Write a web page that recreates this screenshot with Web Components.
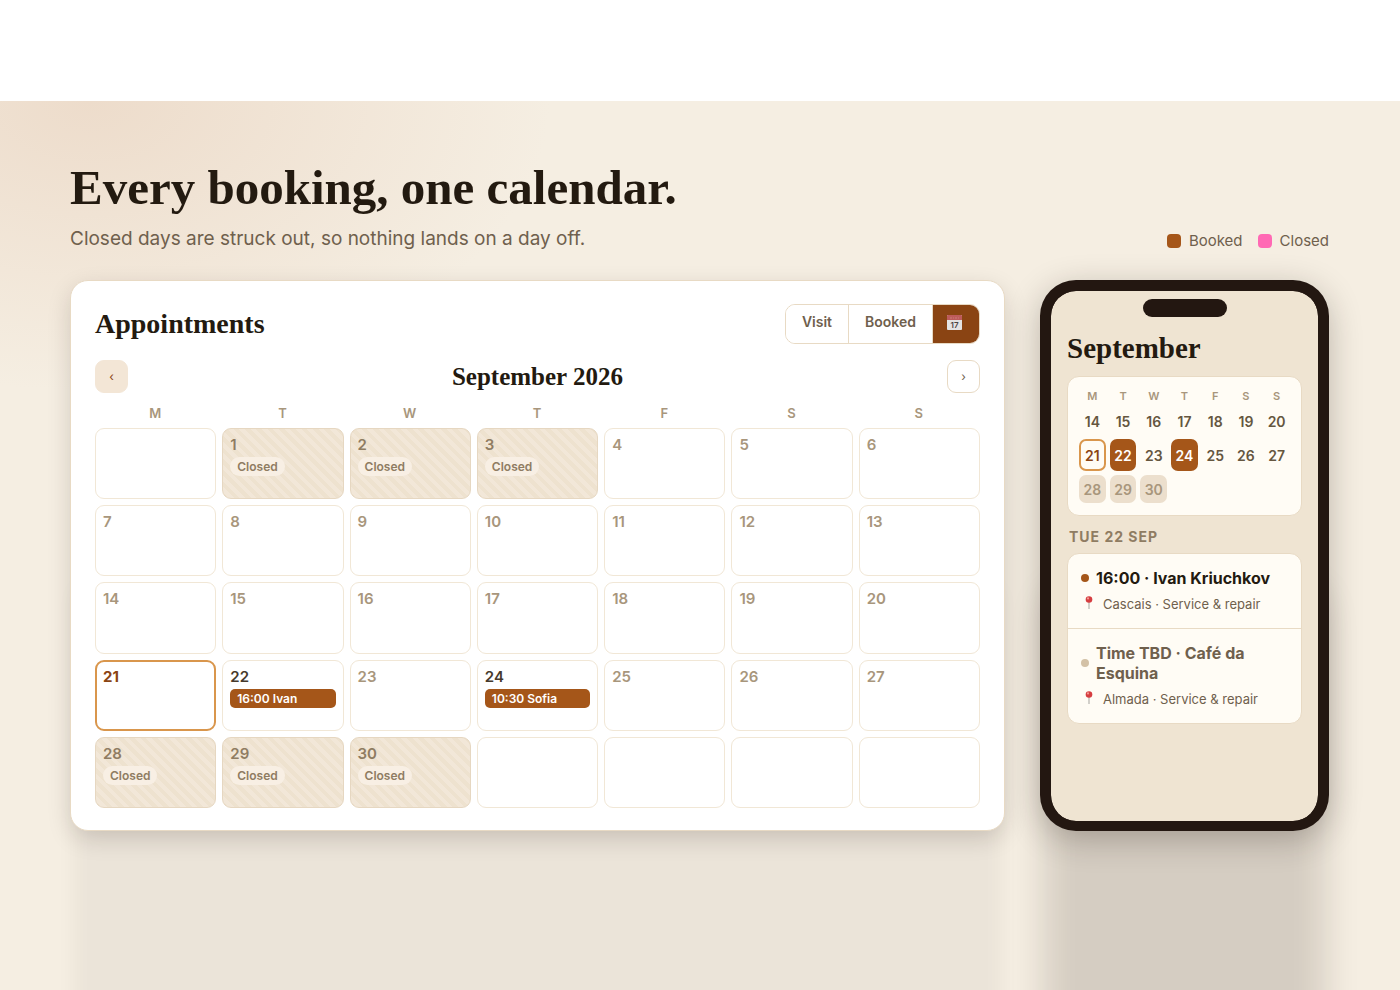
<!DOCTYPE html>
<html lang="en">
<head>
<meta charset="utf-8">
<title>Booking calendar</title>
<style>
  :root {
    --ink: #231a10;
    --muted: #6f604d;
    --faint: #a8967c;
    --line: #e8dac4;
    --rust: #a55619;
    --rust-dark: #8a4413;
    --sand: #efe4d2;
    --amber: #d9964c;
    --serif: "Liberation Serif", "Times New Roman", serif;
  }
  * { box-sizing: border-box; }
  body {
    margin: 0;
    min-height: 100vh;
    display: flex;
    flex-direction: column;
    background: #fff;
    color: var(--ink);
    font-family: Inter, "Liberation Sans", sans-serif;
    overflow: hidden;
  }
</style>
</head>
<body>
<booking-showcase>
  <h1 slot="title">Every booking, one calendar.</h1>
  <p slot="lead">Closed days are struck out, so nothing lands on a day off.</p>
  <legend-item slot="legend">Booked</legend-item>
  <legend-item slot="legend" tone="closed">Closed</legend-item>
  <month-card>
    <span slot="title">Appointments</span>
    <span slot="month">September 2026</span>
  </month-card>
  <phone-frame>
    <span slot="title">September</span>
    <mini-calendar></mini-calendar>
    <day-agenda>
      <span slot="date">TUE 22 SEP</span>
      <agenda-item>16:00 · Ivan Kriuchkov<span slot="place">Cascais · Service &amp; repair</span></agenda-item>
      <agenda-item pending>Time TBD · Café da Esquina<span slot="place">Almada · Service &amp; repair</span></agenda-item>
    </day-agenda>
  </phone-frame>
</booking-showcase>

<script>
const DAYS = ['M', 'T', 'W', 'T', 'F', 'S', 'S'];
const CLOSED = [1, 2, 3, 28, 29, 30];
const EVENTS = { 22: '16:00 Ivan', 24: '10:30 Sofia' };
const TODAY = 21;

function mount(el, html) {
  el.attachShadow({ mode: 'open' }).innerHTML = '<style>*{box-sizing:border-box}</style>' + html;
}

customElements.define('booking-showcase', class extends HTMLElement {
  connectedCallback() {
    mount(this, `
      <style>
        :host {
          display: block;
          flex: 1;
          margin-top: 101px;
          padding: 58px 71px 0 70px;
          background:
            radial-gradient(ellipse 460px 290px at 90px 0, #eddccb, rgba(237, 220, 203, 0)),
            #f5eee2;
        }
        header { display: flex; justify-content: space-between; align-items: flex-end; margin-bottom: 27px; }
        ::slotted(h1) { margin: 0 0 8px; font: 700 49px/58px var(--serif); }
        ::slotted(p) { margin: 0; font-size: 19px; line-height: 28px; color: var(--muted); }
        .legend { display: flex; gap: 15px; }
        .stage { display: flex; gap: 35px; }
      </style>
      <header>
        <div><slot name="title"></slot><slot name="lead"></slot></div>
        <div class="legend"><slot name="legend"></slot></div>
      </header>
      <div class="stage"><slot></slot></div>`);
  }
});

customElements.define('legend-item', class extends HTMLElement {
  connectedCallback() {
    mount(this, `
      <style>
        :host { display: flex; align-items: center; gap: 8px; font-size: 15px; line-height: 24px; color: var(--muted); }
        i { width: 14px; height: 14px; border-radius: 4px; background: var(--rust); }
        :host([tone="closed"]) i { background: #ff69b4; }
      </style>
      <i></i><slot></slot>`);
  }
});

customElements.define('view-switch', class extends HTMLElement {
  connectedCallback() {
    mount(this, `
      <style>
        :host { display: flex; height: 40px; border: 1px solid var(--line); border-radius: 10px; overflow: hidden; }
        button {
          padding: 0 16px 4px;
          border: 0;
          border-right: 1px solid var(--line);
          background: #fff;
          color: var(--muted);
          font: 600 14px/20px Inter, "Liberation Sans", sans-serif;
        }
        button.on { width: 46px; padding: 0 4px 3px 0; border: 0; background: var(--rust-dark); }
        svg { display: block; margin: 0 auto; }
      </style>
      <button type="button">Visit</button>
      <button type="button">Booked</button>
      <button type="button" class="on" aria-label="Calendar view" aria-pressed="true">
        <svg width="15" height="15" viewBox="0 0 15 15">
          <rect width="15" height="15" rx="1" fill="#e4e3e2"/>
          <path d="M0 1a1 1 0 0 1 1-1h13a1 1 0 0 1 1 1v4H0z" fill="#bd5b5b"/>
          <path d="M3 3h2M6 3h1M8 3h2M11 3h1" stroke="#cc7c78"/>
          <text x="7.5" y="13" text-anchor="middle" font-family="Inter" font-size="8" fill="#4a4542">17</text>
        </svg>
      </button>`);
  }
});

customElements.define('day-cell', class extends HTMLElement {
  connectedCallback() {
    const day = Number(this.getAttribute('day'));
    let tag = '';
    if (CLOSED.includes(day)) { this.className = 'closed'; tag = '<span class="pill">Closed</span>'; }
    if (EVENTS[day]) { this.className = 'booked'; tag = `<span class="event">${EVENTS[day]}</span>`; }
    if (day === TODAY) this.className = 'today';
    mount(this, `
      <style>
        :host {
          display: flex;
          flex-direction: column;
          align-items: flex-start;
          gap: 2px;
          padding: 6px 7px;
          border: 1px solid #f1e7d6;
          border-radius: 9px;
          color: var(--faint);
          font-size: 15px;
          font-weight: 600;
          line-height: 20px;
        }
        :host(.closed) {
          border-color: #e6d7c1;
          color: #8f7c62;
          background: repeating-linear-gradient(45deg, #eee2cf 0 4px, #f2e7d8 4px 8px);
        }
        :host(.booked) { color: #463a2c; }
        :host(.today) { border: 2px solid var(--amber); padding: 5px 6px; color: var(--rust-dark); font-weight: 700; }
        .pill { padding: 0 7px; border-radius: 10px; background: #f8efe4; font-size: 12px; line-height: 19px; }
        .event {
          align-self: stretch;
          padding: 0 7px;
          border-radius: 5px;
          background: var(--rust);
          color: #fff;
          font-size: 12px;
          line-height: 19px;
          white-space: nowrap;
        }
      </style>
      ${day ? `<span>${day}</span>` : ''}${tag}`);
  }
});

customElements.define('month-card', class extends HTMLElement {
  connectedCallback() {
    // September 2026 starts on a Tuesday
    let rows = '';
    for (let w = 0; w < 5; w++) {
      rows += '<tr>';
      for (let d = 0; d < 7; d++) {
        const n = w * 7 + d;
        rows += `<td><day-cell day="${n > 0 && n <= 30 ? n : ''}"></day-cell></td>`;
      }
      rows += '</tr>';
    }
    mount(this, `
      <style>
        :host {
          flex: 1;
          display: flex;
          flex-direction: column;
          padding: 23px 24px 22px;
          border: 1px solid var(--line);
          border-radius: 18px;
          background: #fff;
          box-shadow: 0 8px 26px -3px rgba(34, 22, 16, .2), 0 300px 20px -4px rgba(34, 22, 16, .045);
        }
        .bar, nav { display: flex; align-items: center; justify-content: space-between; }
        h2, h3 { margin: 0; font-family: var(--serif); font-weight: 700; }
        h2 { font-size: 28px; line-height: 32px; }
        h3 { font-size: 25px; line-height: 28px; }
        nav { margin: 16px 0 12px; }
        nav button {
          width: 33px;
          height: 33px;
          padding: 0;
          border: 1px solid var(--line);
          border-radius: 9px;
          background: #fff;
          color: var(--muted);
          font: 12px/20px Inter, "Liberation Sans", sans-serif;
        }
        nav button.back { border-color: #f3e6d6; background: #f3e6d6; color: var(--rust-dark); }
        table { flex: 1; display: grid; grid-template: auto repeat(5, 1fr) / repeat(7, 1fr); gap: 6px; }
        thead, tbody, tr { display: contents; }
        th { padding: 0; font-size: 13px; font-weight: 600; line-height: 17px; letter-spacing: 1px; color: var(--faint); }
        td { display: grid; padding: 0; min-width: 0; }
      </style>
      <div class="bar"><h2><slot name="title"></slot></h2><view-switch></view-switch></div>
      <nav aria-label="Month">
        <button type="button" class="back" aria-label="Previous month">‹</button>
        <h3><slot name="month"></slot></h3>
        <button type="button" aria-label="Next month">›</button>
      </nav>
      <table>
        <thead><tr>${DAYS.map(d => `<th>${d}</th>`).join('')}</tr></thead>
        <tbody>${rows}</tbody>
      </table>`);
  }
});

customElements.define('phone-frame', class extends HTMLElement {
  connectedCallback() {
    mount(this, `
      <style>
        :host {
          display: block;
          flex: none;
          width: 289px;
          min-height: 551px;
          padding: 8px 16px 16px;
          border: 10px solid #231711;
          border-width: 11px 11px 10px;
          border-radius: 36px;
          background: linear-gradient(var(--sand), var(--sand)) padding-box, #231711;
          box-shadow: 0 8px 34px -2px rgba(34, 22, 16, .3), 0 300px 34px -4px rgba(34, 22, 16, .15);
        }
        .notch { width: 84px; height: 18px; margin: 0 auto 15px; border-radius: 9px; background: #231711; }
        h2 { margin: 0 0 12px; font: 700 29px/32px var(--serif); }
      </style>
      <div class="notch"></div>
      <h2><slot name="title"></slot></h2>
      <slot></slot>`);
  }
});

customElements.define('mini-calendar', class extends HTMLElement {
  connectedCallback() {
    const cell = n => {
      if (n > 30) return '<td></td>';
      const cls = n === TODAY ? 'today' : EVENTS[n] ? 'booked' : CLOSED.includes(n) ? 'closed' : '';
      return `<td class="${cls}">${n}</td>`;
    };
    const week = start => `<tr>${DAYS.map((_, i) => cell(start + i)).join('')}</tr>`;
    mount(this, `
      <style>
        :host {
          display: block;
          padding: 11px 11px 12px;
          border: 1px solid var(--line);
          border-radius: 12px;
          background: #fffcf5;
        }
        table { display: grid; grid-template: 15px 28px 32px 28px / repeat(7, 1fr); gap: 4px; text-align: center; }
        thead, tbody, tr { display: contents; }
        th, td { display: flex; align-items: center; justify-content: center; padding: 0; }
        th { font-size: 11px; font-weight: 600; color: var(--faint); }
        td { border-radius: 7px; font-size: 14px; font-weight: 600; color: #65563f; }
        .today { border: 2px solid var(--amber); color: var(--rust-dark); }
        .booked { background: var(--rust); color: #fff; }
        .closed { background: #ecdfcd; color: var(--faint); }
      </style>
      <table>
        <thead><tr>${DAYS.map(d => `<th>${d}</th>`).join('')}</tr></thead>
        <tbody>${week(14)}${week(21)}${week(28)}</tbody>
      </table>`);
  }
});

customElements.define('day-agenda', class extends HTMLElement {
  connectedCallback() {
    mount(this, `
      <style>
        :host { display: block; }
        h3 { margin: 11px 0 6px; padding-left: 2px; font-size: 14px; font-weight: 700; line-height: 20px; letter-spacing: 1px; color: #8f7c62; }
        .list { border: 1px solid var(--line); border-radius: 12px; background: #fffcf5; }
      </style>
      <h3><slot name="date"></slot></h3>
      <div class="list"><slot></slot></div>`);
  }
});

customElements.define('agenda-item', class extends HTMLElement {
  connectedCallback() {
    mount(this, `
      <style>
        :host { display: block; padding: 14px 13px 16px; }
        :host(:not(:last-child)) { border-bottom: 1px solid var(--line); }
        .who { display: flex; align-items: center; gap: 7px; font-size: 16px; font-weight: 700; line-height: 20px; }
        i { flex: none; width: 8px; height: 8px; border-radius: 50%; background: var(--rust); }
        :host([pending]) .who { color: var(--muted); }
        :host([pending]) i { background: #d3c1a6; }
        .where { display: flex; gap: 9px; margin-top: 8px; padding-left: 3px; font-size: 13px; line-height: 16px; color: var(--muted); }
      </style>
      <div class="who"><i></i><span><slot></slot></span></div>
      <div class="where">
        <svg width="10" height="14" viewBox="0 0 10 14" aria-hidden="true">
          <path d="M5 6v7" stroke="#b5b2ae" stroke-width="1.2"/>
          <circle cx="5" cy="3.5" r="3.3" fill="#d63d40"/>
          <circle cx="4" cy="2.4" r="1.1" fill="#f29a92"/>
        </svg>
        <slot name="place"></slot>
      </div>`);
  }
});
</script>
</body>
</html>
